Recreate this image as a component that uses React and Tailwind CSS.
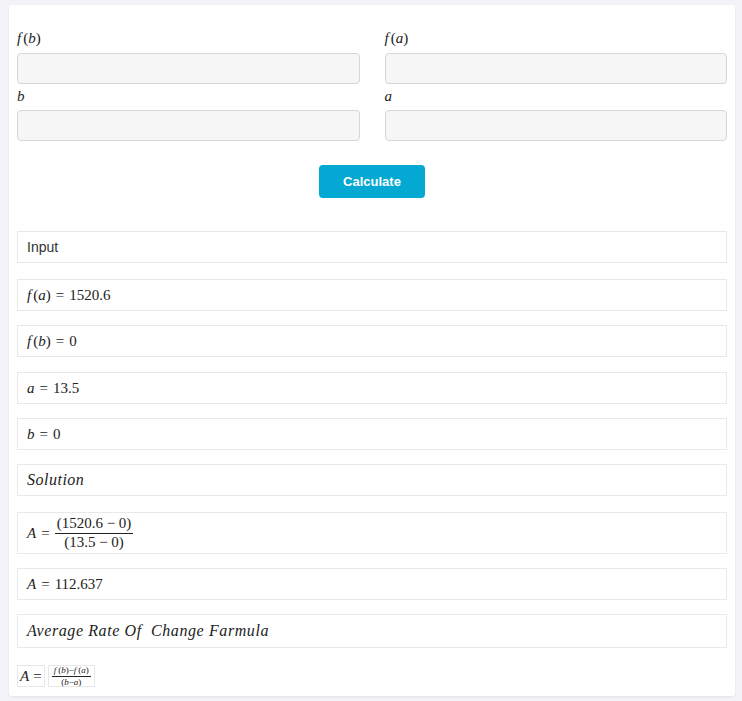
import React from "react";

const serif = { fontFamily: '"Liberation Serif", "DejaVu Serif", serif' };

function Mi({ children, gap = false }) {
  return <span className={`italic ${gap ? "mr-[2px]" : ""}`}>{children}</span>;
}

function Eq() {
  return <span className="mx-[5px]">=</span>;
}

function FieldLabel({ children }) {
  return (
    <div className="h-[24px] text-[15px] leading-[24px] text-[#222] font-['Liberation_Serif',serif]">
      {children}
    </div>
  );
}

function Field() {
  return <div className="h-[31px] rounded-[4px] border border-[#d6d6d6] bg-[#f6f6f6]" />;
}

function Row({ children, className = "", h = "h-[32px]" }) {
  return (
    <div className={`${h} flex items-center border border-[#e8e8e8] bg-white px-[9px] ${className}`}>
      {children}
    </div>
  );
}

function Frac({ num, den, className = "" }) {
  return (
    <span className={`inline-flex flex-col items-center align-middle ${className}`}>
      <span className="px-[2px] leading-[1.15]">{num}</span>
      <span className="h-px w-full bg-[#222]" />
      <span className="px-[2px] leading-[1.15]">{den}</span>
    </span>
  );
}

export default function App() {
  return (
    <div className="min-h-[701px] bg-[#f4f4f8] pl-[9px] pr-[7px] pt-[5px] pb-[5px]">
      <div className="rounded-[3px] bg-white shadow-[0_1px_3px_rgba(0,0,0,0.08)] px-[8px] pt-[21px] pb-[9px]">
        <div className="grid grid-cols-2 gap-x-[25px]">
          <div>
            <FieldLabel><Mi gap>f</Mi>(<Mi>b</Mi>)</FieldLabel>
            <div className="mt-[3px]"><Field /></div>
            <FieldLabel><Mi>b</Mi></FieldLabel>
            <div className="mt-[2px]"><Field /></div>
          </div>
          <div>
            <FieldLabel><Mi gap>f</Mi>(<Mi>a</Mi>)</FieldLabel>
            <div className="mt-[3px]"><Field /></div>
            <FieldLabel><Mi>a</Mi></FieldLabel>
            <div className="mt-[2px]"><Field /></div>
          </div>
        </div>

        <div className="mt-[24px] flex justify-center">
          <button className="h-[33px] w-[106px] rounded-[4px] bg-[#03a8d3] text-[13px] font-semibold text-white font-['Liberation_Sans',Arial,sans-serif]">
            Calculate
          </button>
        </div>

        <div className="mt-[33px] flex flex-col text-[15px] text-[#222]" style={serif}>
          <Row>
            <span className="text-[14px] text-[#333] font-['Liberation_Sans',Arial,sans-serif]">Input</span>
          </Row>
          <Row className="mt-[16px]">
            <span><Mi gap>f</Mi>(<Mi>a</Mi>)<Eq />1520.6</span>
          </Row>
          <Row className="mt-[14px]">
            <span><Mi gap>f</Mi>(<Mi>b</Mi>)<Eq />0</span>
          </Row>
          <Row className="mt-[15px]">
            <span><Mi>a</Mi><Eq />13.5</span>
          </Row>
          <Row className="mt-[14px]">
            <span><Mi>b</Mi><Eq />0</span>
          </Row>
          <Row className="mt-[14px]">
            <span className="italic text-[16px] tracking-[0.5px]">Solution</span>
          </Row>
          <Row className="mt-[16px]" h="h-[42px]">
            <span className="flex items-center">
              <Mi>A</Mi>
              <Eq />
              <Frac num="(1520.6 − 0)" den="(13.5 − 0)" className="text-[15px]" />
            </span>
          </Row>
          <Row className="mt-[14px]">
            <span><Mi>A</Mi><Eq />112.637</span>
          </Row>
          <Row className="mt-[14px]" h="h-[34px]">
            <span className="italic text-[16px] tracking-[0.6px]">Average Rate Of &nbsp;Change Farmula</span>
          </Row>
          <div className="mt-[17px] flex items-center gap-[3px]">
            <span className="flex h-[22px] items-center border border-[#e8e8e8] px-[2px] text-[15px]">
              <Mi>A</Mi><span className="ml-[4px]">=</span>
            </span>
            <span className="flex h-[22px] items-center border border-[#e8e8e8] px-[3px]">
              <Frac
                num={<span><Mi gap>f</Mi>(<Mi>b</Mi>)−<Mi gap>f</Mi>(<Mi>a</Mi>)</span>}
                den={<span>(<Mi>b</Mi>−<Mi>a</Mi>)</span>}
                className="text-[9px]"
              />
            </span>
          </div>
        </div>
      </div>
    </div>
  );
}
